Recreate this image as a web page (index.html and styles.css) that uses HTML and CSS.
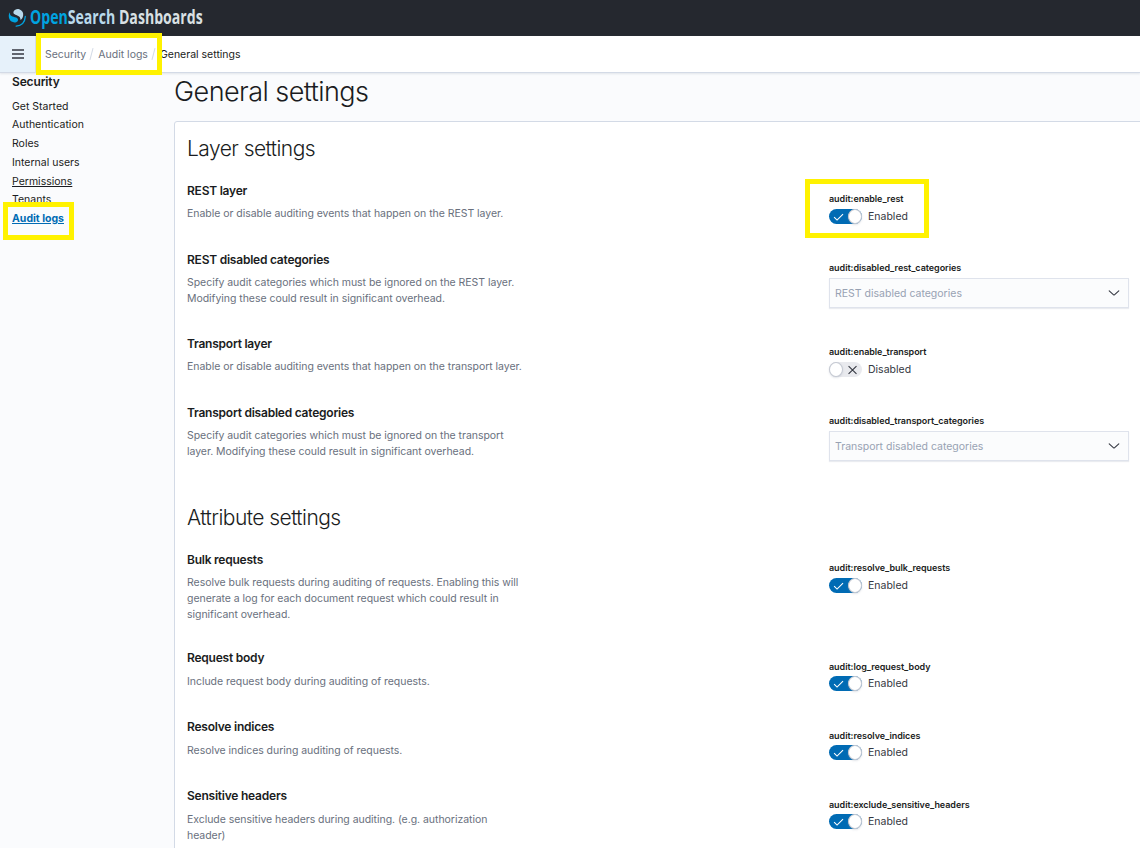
FILE: index.html
```html
<!DOCTYPE html>
<html lang="en">
<head>
<meta charset="utf-8">
<title>General settings</title>
<link rel="stylesheet" href="styles.css">
</head>
<body>
<svg class="defs" aria-hidden="true">
  <symbol id="check" viewBox="0 0 12 12"><path d="M1.2 6.2 4.4 9.300 10.900 2.800" fill="none" stroke="#fff" stroke-width="1.2"/></symbol>
  <symbol id="cross" viewBox="0 0 12 12"><path d="M1.700 1.700 10.300 10.300M10.300 1.700 1.700 10.300" fill="none" stroke="#343741" stroke-width="1.2"/></symbol>
  <symbol id="chevron" viewBox="0 0 12 12"><path d="M1.200 3.900 5.600 7.900Q6 8.200 6.400 7.900L10.800 3.900" fill="none" stroke="#343741" stroke-width="1.1" stroke-linecap="round"/></symbol>
</svg>
<header class="brand">
  <svg class="logo" viewBox="0 0 26 36" width="26" height="36">
    <path fill="#b9d9eb" d="M13.600 11.500C14.500 9.600 17 8.600 19.200 9.300C22 10.200 23.400 12.300 23.200 15.100C23 17.700 21.800 19.300 20.500 20.100C20.600 17.300 19.400 16.200 17.200 15.400C14.600 14.500 12.800 13.700 13.600 11.500Z"/>
    <path fill="#00a3e0" d="M9.800 12.300C8.500 14 8.500 17 9.400 19.100C10.500 21.800 13.500 23 16.200 22.200C18.800 21.400 18.500 18.500 16.200 17.600C12.400 16.500 9.700 16.400 9.800 12.300Z"/>
    <path fill="none" stroke="#00a3e0" stroke-width="1.300" stroke-linecap="round" d="M25.300 16.500C25 21.900 21.500 25.600 16.200 26.100"/>
  </svg>
  <div class="wordmark"><span class="open">Open</span><span class="search">Search</span> Dashboards</div>
</header>
<nav class="crumbbar">
  <div class="menu"><svg width="12" height="10" viewBox="0 0 12 10"><path d="M0 1h12M0 5h12M0 9h12" stroke="#343741" stroke-width="1.300"/></svg></div>
  <div class="crumbs">
    <span class="crumb">Security</span><i class="slash"></i>
    <span class="crumb">Audit logs</span><i class="slash"></i>
    <span class="crumb current">General settings</span>
    <b class="mark mark-crumbs"></b>
  </div>
</nav>
<div class="page">
  <aside class="side">
    <h2>Security</h2>
    <a>Get Started</a><a>Authentication</a><a>Roles</a><a>Internal users</a><a class="hover">Permissions</a><a>Tenants</a><a class="active">Audit logs<b class="mark mark-nav"></b></a>
  </aside>
  <main class="main">
    <h1>General settings</h1>
    <div class="panel">
      <h2 class="section">Layer settings</h2>
      <section class="row">
        <div class="info"><h3>REST layer</h3><p>Enable or disable auditing events that happen on the REST layer.</p></div>
        <div class="field"><label>audit:enable_rest</label><div class="switch"><span class="track on"><svg><use href="#check"/></svg><i></i></span>Enabled</div><b class="mark mark-rest"></b></div>
      </section>
      <section class="row two">
        <div class="info"><h3>REST disabled categories</h3><p>Specify audit categories which must be ignored on the REST layer.<br>Modifying these could result in significant overhead.</p></div>
        <div class="field"><label>audit:disabled_rest_categories</label><div class="combo"><span>REST disabled categories</span><svg><use href="#chevron"/></svg></div></div>
      </section>
      <section class="row">
        <div class="info"><h3>Transport layer</h3><p>Enable or disable auditing events that happen on the transport layer.</p></div>
        <div class="field"><label>audit:enable_transport</label><div class="switch"><span class="track"><i></i><svg><use href="#cross"/></svg></span>Disabled</div></div>
      </section>
      <section class="row two">
        <div class="info"><h3>Transport disabled categories</h3><p>Specify audit categories which must be ignored on the transport<br>layer. Modifying these could result in significant overhead.</p></div>
        <div class="field"><label>audit:disabled_transport_categories</label><div class="combo"><span>Transport disabled categories</span><svg><use href="#chevron"/></svg></div></div>
      </section>
      <h2 class="section later">Attribute settings</h2>
      <section class="row three">
        <div class="info"><h3>Bulk requests</h3><p>Resolve bulk requests during auditing of requests. Enabling this will<br>generate a log for each document request which could result in<br>significant overhead.</p></div>
        <div class="field"><label>audit:resolve_bulk_requests</label><div class="switch"><span class="track on"><svg><use href="#check"/></svg><i></i></span>Enabled</div></div>
      </section>
      <section class="row lower">
        <div class="info"><h3>Request body</h3><p>Include request body during auditing of requests.</p></div>
        <div class="field"><label>audit:log_request_body</label><div class="switch"><span class="track on"><svg><use href="#check"/></svg><i></i></span>Enabled</div></div>
      </section>
      <section class="row lower">
        <div class="info"><h3>Resolve indices</h3><p>Resolve indices during auditing of requests.</p></div>
        <div class="field"><label>audit:resolve_indices</label><div class="switch"><span class="track on"><svg><use href="#check"/></svg><i></i></span>Enabled</div></div>
      </section>
      <section class="row two lower">
        <div class="info"><h3>Sensitive headers</h3><p>Exclude sensitive headers during auditing. (e.g. authorization<br>header)</p></div>
        <div class="field"><label>audit:exclude_sensitive_headers</label><div class="switch"><span class="track on"><svg><use href="#check"/></svg><i></i></span>Enabled</div></div>
      </section>
    </div>
  </main>
</div>
</body>
</html>
```
FILE: styles.css
```css
* { box-sizing: border-box; margin: 0; padding: 0; }
body {
  width: 1140px; height: 848px; overflow: hidden;
  display: flex; flex-direction: column;
  background: #fafbfd; color: #1a1c21;
  font: 10.5px/18px Inter, "Liberation Sans", sans-serif;
}
.defs { display: none; }
.brand { flex: none; height: 36px; display: flex; background: #25282f; }
.logo { flex: none; }
.wordmark {
  margin-left: 3.500px; white-space: nowrap; color: #d9e0e3;
  font: 700 19px/34px "Open Sans", sans-serif;
  transform: scaleX(.742); transform-origin: 0 50%;
}
.open { color: #00a3e0; }
.search { color: #b9d9eb; }

.crumbbar {
  flex: none; height: 37px; display: flex; position: relative; z-index: 2;
  background: #fff; border-bottom: 1px solid #d3dae6;
  box-shadow: 0 1px 2px rgba(152, 162, 179, .25);
}
.menu {
  width: 36px; display: flex; align-items: center; justify-content: center;
  background: #e6f1fa; border-right: 1px solid #d3dae6;
}
.crumbs { display: flex; align-items: center; padding-left: 9px; position: relative; }
.crumb { color: #69707d; white-space: nowrap; padding-top: 1px; }
.current { color: #1a1c21; }
.slash { width: 1px; height: 12px; margin: 0 6px 0 5px; background: #d3dae6; transform: rotate(15deg); }

.mark { position: absolute; border: 5px solid #fff200; }
.mark-crumbs { left: 0; top: -3px; width: 126px; height: 42px; }
.mark-nav { left: -9px; top: -8px; width: 71px; height: 38px; }
.mark-rest { left: -24px; top: -3px; width: 124px; height: 59px; }

.page { flex: 1; min-height: 0; display: flex; }
.side { flex: none; width: 174px; padding: 0 0 0 12px; display: flex; flex-direction: column; align-items: flex-start; }
.side h2 { font-size: 12px; font-weight: 600; line-height: 18px; letter-spacing: -.15px; margin-bottom: 6.500px; }
.side a { line-height: 18.750px; }
.side .hover { text-decoration: underline; }
.side .active { position: relative; color: #006bb4; font-weight: 700; text-decoration: underline; }

.main { flex: none; width: 980px; }
h1 { font-size: 27px; font-weight: 300; line-height: 37px; height: 48px; letter-spacing: -.55px; }
.panel {
  width: 980px; height: 760px; padding: 12px;
  background: #fff; border: 1px solid #d3dae6; border-radius: 3px;
}
.section { font-size: 21px; font-weight: 300; line-height: 30px; margin-bottom: 18px; letter-spacing: -.55px; }
.later { margin-top: 15px; }
.row { height: 69px; display: grid; grid-template-columns: 642px 300px; }
.two { height: 84px; }
.three { height: 98px; }
.info h3 { font-size: 12px; font-weight: 600; line-height: 18px; letter-spacing: -.23px; margin-bottom: 6px; }
.info p { color: #69707d; line-height: 15.750px; letter-spacing: -.04px; white-space: nowrap; }
.field { position: relative; padding-top: 11px; }
.field label { display: block; font-size: 9px; font-weight: 600; line-height: 12px; letter-spacing: -.05px; margin-bottom: 4px; }
.lower .info h3 { margin-bottom: 7px; }
.lower .field { padding-top: 12px; }
.lower .field label { margin-bottom: 3px; }
.switch { display: flex; align-items: center; height: 15px; gap: 6px; color: #343741; }
.track { width: 33px; height: 15px; border-radius: 8px; display: flex; align-items: center; justify-content: space-between; background: #e9eaee; }
.track svg { width: 12px; height: 12px; margin: 0 4px; }
.track i { width: 15px; height: 15px; border-radius: 50%; background: #fff; border: 1px solid #c5c9d2; box-shadow: 0 1px 2px rgba(152, 162, 179, .3); }
.on { background: #006bb4; }
.combo {
  height: 30px; padding: 0 8px 0 5px; display: flex; align-items: center; justify-content: space-between;
  background: #fbfcfd; border: 1px solid #dfe3ec; color: #98a2b3;
  box-shadow: 0 1px 1px rgba(152, 162, 179, .2);
}
.combo span { padding-top: 1px; }
.combo svg { width: 12px; height: 12px; }
```
